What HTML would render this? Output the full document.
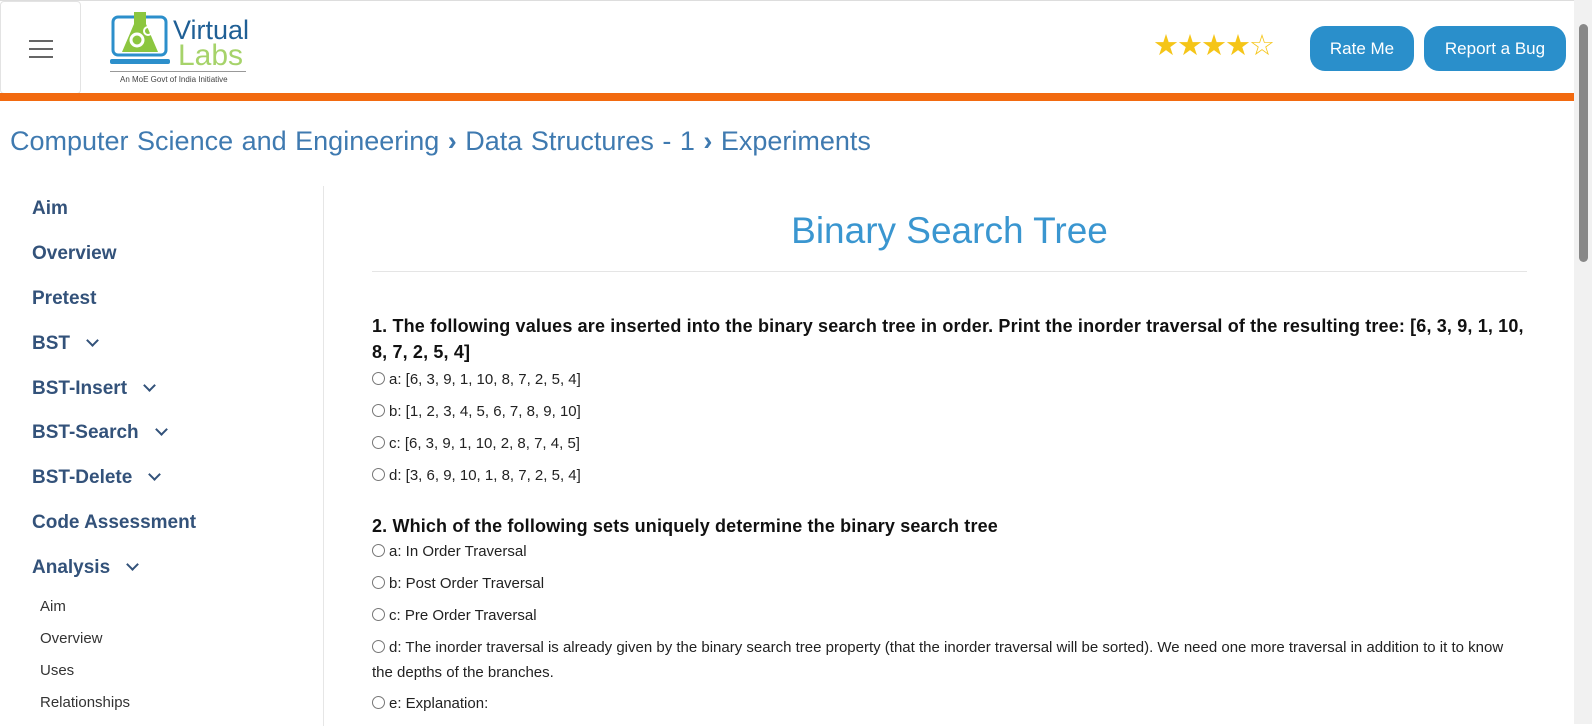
<!DOCTYPE html>
<html><head><style>
body{margin:0;width:1592px;height:724px;overflow:hidden;background:#fff;font-family:"Liberation Sans",sans-serif;position:relative}
.hdr{position:absolute;left:0;top:0;width:1574px;height:93px;border-top:1px solid #ddd}
.menu{position:absolute;left:0;top:0;width:79px;height:91px;border:1px solid #e3e3e3;border-radius:4px}
.menu i{position:absolute;left:28px;width:24px;height:2px;background:#666}
.orange{position:absolute;left:0;top:93px;width:1574px;height:8px;background:#f26a10}
.btn{position:absolute;top:25px;height:45px;background:#2a8fcb;color:#fff;border-radius:15px;font-size:17px;line-height:45px;text-align:center}
.crumb{position:absolute;left:10px;top:126px;font-size:27px;color:#3f7ab0;word-spacing:1px}
.side{position:absolute;left:32px;font-size:19px;font-weight:bold;color:#33527a}
.sub{position:absolute;left:40px;font-size:15px;color:#333}
.vline{position:absolute;left:323px;top:186px;width:1px;height:540px;background:#e6e6e6}
.q{position:absolute;left:372px;font-size:18px;font-weight:bold;color:#111;line-height:26px;width:1160px;letter-spacing:0.15px}
.o{position:absolute;left:372px;font-size:15px;color:#222;line-height:25px;width:1140px}
.o b{display:inline-block;width:11px;height:11px;border:1px solid #777;border-radius:50%;margin-right:4px;vertical-align:-1px;font-weight:normal}
.chev{display:inline-block;width:7px;height:7px;border-right:2px solid #33527a;border-bottom:2px solid #33527a;transform:rotate(45deg);margin-left:18px;vertical-align:4px}
</style></head><body>
<div class="hdr">
<div class="menu"><i style="top:38px"></i><i style="top:46px"></i><i style="top:54px"></i></div>
<svg style="position:absolute;left:110px;top:8px" width="145" height="76" viewBox="0 0 145 76">
<rect x="3" y="8" width="53" height="38" rx="5" fill="none" stroke="#2c8fcb" stroke-width="3"/>
<rect x="0" y="50" width="60" height="5" rx="2" fill="#2c8fcb"/>
<path d="M24 3h12v12l12 28h-36l12-28z" fill="#8cc63f"/>
<circle cx="27" cy="31" r="6" fill="none" stroke="#fff" stroke-width="3"/>
<circle cx="38" cy="22" r="4" fill="none" stroke="#fff" stroke-width="2"/>
<text x="63" y="30" font-size="27" fill="#1f5f95" font-family="Liberation Sans">Virtual</text>
<text x="68" y="56" font-size="30" fill="#a6d36a" font-family="Liberation Sans">Labs</text>
<rect x="0" y="62" width="136" height="1" fill="#999"/>
<text x="10" y="73" font-size="8" fill="#444" font-family="Liberation Sans">An MoE Govt of India Initiative</text>
</svg>
<div style="position:absolute;left:1153px;top:27px;font-size:29px;color:#f5c518;letter-spacing:-2px">★★★★<span style="color:#f5c518">☆</span></div>
<div class="btn" style="left:1310px;width:104px">Rate Me</div>
<div class="btn" style="left:1424px;width:142px">Report a Bug</div>
</div>
<div class="orange"></div>
<div style="position:absolute;right:0;top:0;width:18px;height:724px;background:#f1f1f1"></div>
<div style="position:absolute;right:4px;top:24px;width:9px;height:238px;background:#888;border-radius:5px"></div>
<div class="crumb">Computer Science and Engineering <b>›</b> Data Structures - 1 <b>›</b> Experiments</div>
<div class="side" style="top:198px">Aim</div>
<div class="side" style="top:243px">Overview</div>
<div class="side" style="top:288px">Pretest</div>
<div class="side" style="top:333px">BST<span class="chev"></span></div>
<div class="side" style="top:378px">BST-Insert<span class="chev"></span></div>
<div class="side" style="top:422px">BST-Search<span class="chev"></span></div>
<div class="side" style="top:467px">BST-Delete<span class="chev"></span></div>
<div class="side" style="top:512px">Code Assessment</div>
<div class="side" style="top:557px">Analysis<span class="chev"></span></div>
<div class="sub" style="top:598px">Aim</div>
<div class="sub" style="top:630px">Overview</div>
<div class="sub" style="top:662px">Uses</div>
<div class="sub" style="top:694px">Relationships</div>
<div class="vline"></div>
<div style="position:absolute;left:372px;width:1155px;top:210px;text-align:center;font-size:37px;color:#3a96d0">Binary Search Tree</div>
<div style="position:absolute;left:372px;width:1155px;top:271px;height:1px;background:#e5e5e5"></div>
<div class="q" style="top:313px">1. The following values are inserted into the binary search tree in order. Print the inorder traversal of the resulting tree: [6, 3, 9, 1, 10, 8, 7, 2, 5, 4]</div>
<div class="o" style="top:367px"><b></b>a: [6, 3, 9, 1, 10, 8, 7, 2, 5, 4]</div>
<div class="o" style="top:399px"><b></b>b: [1, 2, 3, 4, 5, 6, 7, 8, 9, 10]</div>
<div class="o" style="top:431px"><b></b>c: [6, 3, 9, 1, 10, 2, 8, 7, 4, 5]</div>
<div class="o" style="top:463px"><b></b>d: [3, 6, 9, 10, 1, 8, 7, 2, 5, 4]</div>
<div class="q" style="top:513px">2. Which of the following sets uniquely determine the binary search tree</div>
<div class="o" style="top:539px"><b></b>a: In Order Traversal</div>
<div class="o" style="top:571px"><b></b>b: Post Order Traversal</div>
<div class="o" style="top:603px"><b></b>c: Pre Order Traversal</div>
<div class="o" style="top:635px"><b></b>d: The inorder traversal is already given by the binary search tree property (that the inorder traversal will be sorted). We need one more traversal in addition to it to know the depths of the branches.</div>
<div class="o" style="top:691px"><b></b>e: Explanation:</div>
</body></html>
